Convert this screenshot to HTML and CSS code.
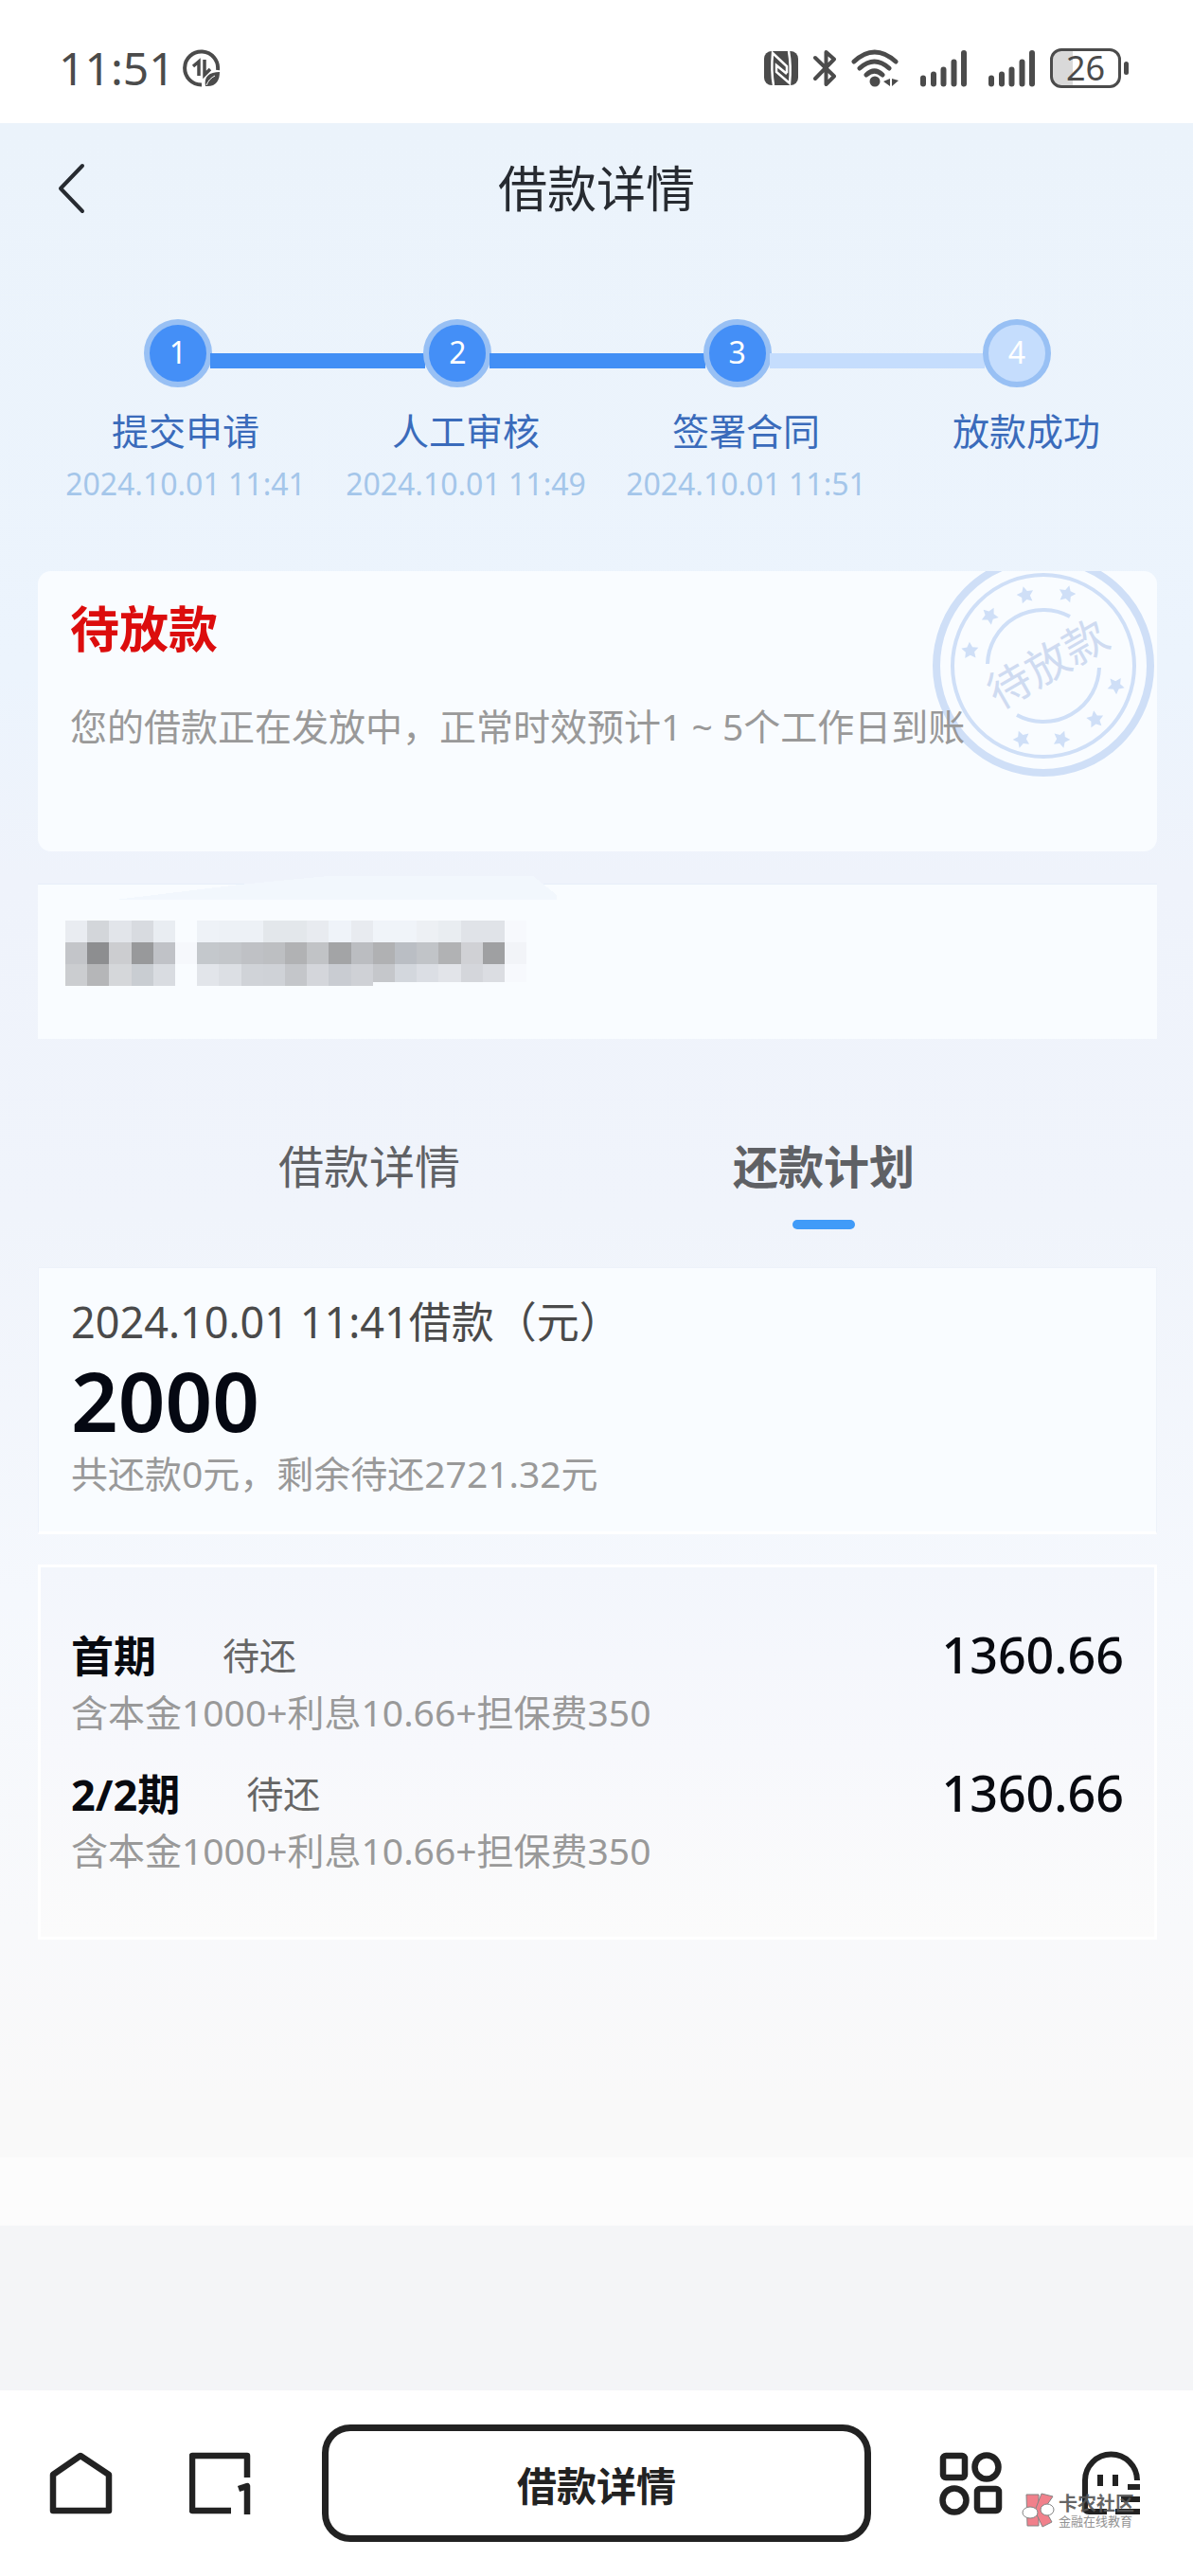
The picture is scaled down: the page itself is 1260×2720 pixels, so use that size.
FILE: index.html
```html
<!DOCTYPE html>
<html lang="zh-CN">
<head>
  <meta charset="UTF-8" />
  <meta name="viewport" content="width=device-width, initial-scale=1" />
  <title>借款详情</title>
  <link rel="stylesheet" href="styles.css">
</head>
<body>
  <div class="status-bar">
    <div class="status-left">
      <span class="time">11:51</span>
      <svg width="40" height="40" viewBox="0 0 40 40" fill="none" stroke="#4b4b4b">
        <path d="M37 22A17.500 17.500 0 1 0 20 37.500" stroke-width="4"/>
        <path d="M17 28V13l-6 5M23 11v16l6-6" stroke-width="3.500"/>
        <path d="M24 39c-2-10 4-15 15-15 0 9-4 16-15 15z" fill="#4b4b4b" stroke="none"/>
        <path d="M25 38c2-5 5-8 9-10" stroke="#fff" stroke-width="1"/>
      </svg>
    </div>
    <div class="status-right">
      <svg width="36" height="38" viewBox="0 0 36 38">
        <rect x="0" y="1" width="36" height="36" rx="8" fill="#4b4b4b"/>
        <path d="M10 37C8 26 8 14 9 3l15 14v7M26 1c2 11 2 24 1 34L13 23v-7l11 9" fill="none" stroke="#fff" stroke-width="2.500"/>
      </svg>
      <svg width="24" height="40" viewBox="0 0 24 40" fill="none" stroke="#4b4b4b" stroke-width="4" stroke-linejoin="round" stroke-linecap="round">
        <path d="M2 9l20 19.500L13.500 37V3L22 10.500 2 31"/>
      </svg>
      <svg width="50" height="40" viewBox="0 0 50 40" fill="none" stroke="#4b4b4b" stroke-width="5" stroke-linecap="round">
        <path d="M3 13Q24.500-7 47 13M9 20Q24.500 6 40 20M16 27Q24.500 19 33 27"/>
        <circle cx="25" cy="34" r="5.500" fill="#4b4b4b" stroke="none"/>
        <path d="M41 31v8l-7-5zM43 31v8l7-6z" fill="#4b4b4b" stroke="none"/>
      </svg>
      <svg class="signal" width="49" height="40" viewBox="0 0 49 40" stroke="#4b4b4b" stroke-width="6" stroke-linecap="round">
        <path d="M3 30.500v6M14 26.500v10M24.500 21.500v15M35.500 13.500v23M46 4v32.500"/>
      </svg>
      <svg class="signal" width="49" height="40" viewBox="0 0 49 40" stroke="#4b4b4b" stroke-width="6" stroke-linecap="round">
        <path d="M3 30.500v6M14 26.500v10M24.500 21.500v15M35.500 13.500v23M46 4v32.500"/>
      </svg>
      <div class="battery"><span>26</span></div>
    </div>
  </div>

  <main>
    <header class="page-header">
      <button class="back" aria-label="返回">
        <svg width="32" height="56" viewBox="0 0 32 56" fill="none" stroke="#272b31" stroke-width="4" stroke-linecap="round" stroke-linejoin="round">
          <path d="M27 4L4 28l23 24"/>
        </svg>
      </button>
      <h1>借款详情</h1>
    </header>

    <section class="stepper">
      <div class="markers">
        <span class="dot">1</span>
        <span class="line"></span>
        <span class="dot">2</span>
        <span class="line"></span>
        <span class="dot">3</span>
        <span class="line todo"></span>
        <span class="dot todo">4</span>
      </div>
      <ol class="steps">
        <li><strong>提交申请</strong><time>2024.10.01 11:41</time></li>
        <li><strong>人工审核</strong><time>2024.10.01 11:49</time></li>
        <li><strong>签署合同</strong><time>2024.10.01 11:51</time></li>
        <li><strong>放款成功</strong></li>
      </ol>
    </section>

    <section class="card state">
      <svg class="stamp" width="240" height="240" viewBox="-120 -120 240 240" fill="none" stroke="#cfdff7">
        <circle r="113" stroke-width="8"/>
        <circle r="96" stroke-width="4"/>
        <path d="M-59-2A59 59 0 0 1 28-52M59 2A59 59 0 0 1-28 52" stroke-width="4"/>
        <defs>
          <path id="star" d="M0-9l2.800 5.500 6.200 1-4.500 4.500 1 6.200-5.500-2.900-5.500 2.900 1-6.200-4.500-4.500 6.200-1z"/>
        </defs>
        <g fill="#cfdff7" stroke="none">
          <use href="#star" transform="translate(-19 -75) rotate(-15)"/>
          <use href="#star" transform="translate(25 -76) rotate(15)"/>
          <use href="#star" transform="translate(-57 -53) rotate(-45)"/>
          <use href="#star" transform="translate(-78 -16) rotate(-75)"/>
          <use href="#star" transform="translate(77 21) rotate(105)"/>
          <use href="#star" transform="translate(55 57) rotate(135)"/>
          <use href="#star" transform="translate(19 78) rotate(165)"/>
          <use href="#star" transform="translate(-23 78) rotate(195)"/>
        </g>
        <text class="stamp-text" x="5" y="17" text-anchor="middle" transform="rotate(-30)">待放款</text>
      </svg>
      <h2>待放款</h2>
      <p>您的借款正在发放中，正常时效预计1 ~ 5个工作日到账</p>
    </section>

    <section class="card account">
      <svg id="mosaic" class="mosaic" width="488" height="69" viewBox="0 0 488 69" shape-rendering="crispEdges">
        <path d="M53-22L184-38l94-9h216l25 20v5z" fill="#f2f7fd"/>
      </svg>
    </section>

    <div class="tabs" role="tablist">
      <button role="tab" aria-selected="false">借款详情</button>
      <button class="active" role="tab" aria-selected="true">还款计划</button>
    </div>

    <section class="card loan">
      <p class="loan-title">2024.10.01 11:41借款（元）</p>
      <p class="loan-amount">2000</p>
      <p class="loan-note">共还款0元，剩余待还2721.32元</p>
    </section>

    <ul class="card plan">
      <li>
        <div class="plan-row">
          <b>首期</b><span>待还</span><em>1360.66</em>
        </div>
        <p>含本金1000+利息10.66+担保费350</p>
      </li>
      <li>
        <div class="plan-row">
          <b>2/2期</b><span>待还</span><em>1360.66</em>
        </div>
        <p>含本金1000+利息10.66+担保费350</p>
      </li>
    </ul>
  </main>

  <nav class="toolbar">
    <div class="tools">
      <button aria-label="主页">
        <svg width="68" height="68" viewBox="0 0 68 68" fill="none" stroke="#222" stroke-width="6.500" stroke-linejoin="round">
          <path d="M4 25L33 5l30 20v38H4z"/>
        </svg>
      </button>
      <button aria-label="窗口">
        <svg width="68" height="68" viewBox="0 0 68 68" fill="none" stroke="#222" stroke-width="6.500" stroke-linejoin="round">
          <path d="M61 28V5H3v58h41M52 40l9-3v30"/>
        </svg>
      </button>
    </div>
    <button class="page-name">借款详情</button>
    <div class="tools">
      <button aria-label="应用">
        <svg width="68" height="68" viewBox="0 0 68 68" fill="none" stroke="#222" stroke-width="6.500">
          <rect x="4" y="5" width="23" height="23" rx="3"/>
          <circle cx="50" cy="17" r="12.500"/>
          <circle cx="16" cy="52" r="12.500"/>
          <rect x="40" y="40" width="23" height="23" rx="3"/>
        </svg>
      </button>
      <button aria-label="我的">
        <svg width="68" height="68" viewBox="0 0 68 68" fill="none" stroke="#222" stroke-width="6">
          <path d="M29 64H10q-4 0-4-4V31a27.500 27.500 0 0 1 55 0M64 38H51M64 51H44M64 64H38"/>
          <path d="M22 25v12M38 25v12"/>
        </svg>
      </button>
    </div>
    <div class="watermark">
      <svg width="36" height="38" viewBox="0 0 36 38" fill="#f0737f" stroke="#777" stroke-width="1">
        <path d="M5 2h13v33H6z"/>
        <path d="M21 1l12 3-9 13 8 14-10 5-8-17z"/>
        <ellipse cx="9" cy="21" rx="8" ry="6" fill="#fff"/>
        <ellipse cx="27" cy="18" rx="7" ry="6" fill="#fff"/>
      </svg>
      <div>
        <b>卡农社区</b>
        <small>金融在线教育</small>
      </div>
    </div>
  </nav>

  <script>
    // masked name and card number, one colour per block
    const rows = [
      "e9ecf1 d3d6da e2e5ea d8dbe0 e9edf2 - eef2f7 edf1f6 edf1f6 e3e7eb e3e7eb e8ebf0 eff3f9 e8ebf0 f0f4f9 f0f4f9 edf0f4 e9edf1 e0e3e8 e0e3e8 f7f9fd",
      "c3c5c9 8d8e90 cccdd0 98999b c0c2c7 f6f8fc c4c8cc c3c6ca bfc1c5 bdbfc2 b1b2b4 c1c3c6 a3a4a6 bbbdc1 b0b1b3 babec4 c1c4c8 b1b2b4 d0d1d5 9fa0a2 f2f4f8",
      "cbcdd0 b5b6b8 d5d7da c9cdd2 d9dce1 - e2e5ea dcdfe4 d0d3d8 cfd2d7 c4c6ca d4d6db c9ccd2 cfd1d6 c5c7cb d3d7dd dbdee4 e2e4e9 d4d6db dbdde2 f7f9fd"
    ];
    const mosaic = document.getElementById("mosaic");
    rows.forEach((row, y) => {
      row.split(" ").forEach((color, x) => {
        if (color === "-") return;
        const block = document.createElementNS("http://www.w3.org/2000/svg", "rect");
        block.setAttribute("x", x * 23.2);
        block.setAttribute("y", y * 23);
        block.setAttribute("width", 23.2);
        block.setAttribute("height", y === 2 && x > 13 ? 19 : 23);
        block.setAttribute("fill", "#" + color);
        mosaic.appendChild(block);
      });
    });
  </script>
</body>
</html>
```
FILE: styles.css
```css
* {
  box-sizing: border-box;
  margin: 0;
  padding: 0;
}

body {
  display: flex;
  flex-direction: column;
  min-height: 100vh;
  font-family: "Noto Sans", "Noto Sans CJK SC", sans-serif;
  background: #f4f5f7;
}

button {
  border: none;
  background: none;
  font-family: inherit;
  cursor: pointer;
}

svg {
  display: block;
}

ul,
ol {
  list-style: none;
}

.status-bar {
  display: flex;
  justify-content: space-between;
  align-items: center;
  height: 130px;
  padding: 14px 68px 0 62px;
  background: #fff;
  color: #4b4b4b;
}

.status-left {
  display: flex;
  align-items: center;
  gap: 8px;
}

.time {
  font-size: 48px;
  line-height: 56px;
}

.status-right {
  display: flex;
  align-items: center;
  gap: 16px;
}

.signal {
  margin-left: 7px;
}

.battery {
  position: relative;
  width: 75px;
  height: 42px;
  margin-right: 8px;
  border: 3px solid #4b4b4b;
  border-radius: 12px;
  background: linear-gradient(90deg, #d9d9d9 30%, #fff 30%);
  font-size: 36px;
  line-height: 36px;
  text-align: center;
}

.battery::after {
  content: "";
  position: absolute;
  top: 11px;
  right: -11px;
  width: 5px;
  height: 14px;
  border-radius: 3px;
  background: #4b4b4b;
}

main {
  flex: 1;
  margin-bottom: 174px;
  padding-bottom: 72px;
  background:
    linear-gradient(#fcfcfc, #fcfcfc) bottom / 100% 72px no-repeat,
    linear-gradient(#ebf3fb 0%, #ecf4fd 26%, #eff3fb 36%, #f0f4fb 52%, #f5f8fd 70%, #f8f9fb 86%, #f9f9f9 94%);
}

.page-header {
  display: grid;
  grid-template-columns: 60px 1fr 60px;
  align-items: center;
  height: 138px;
  padding: 0 60px;
}

h1 {
  color: #272b31;
  font-size: 52px;
  font-weight: 400;
  line-height: 60px;
  text-align: center;
}

.stepper {
  padding-top: 69px;
}

.markers {
  display: flex;
  padding: 0 150px 0 152px;
}

.dot {
  width: 72px;
  height: 72px;
  border: 6px solid #98c0f4;
  border-radius: 50%;
  background: #448ff7;
  color: #fff;
  font-size: 32px;
  line-height: 58px;
  text-align: center;
}

.dot.todo {
  background: #c5ddfd;
}

.line {
  flex: 1;
  height: 16px;
  margin: 36px -2px 0;
  background: #428ff5;
}

.line.todo {
  background: #c5ddfd;
}

.steps {
  display: grid;
  grid-template-columns: repeat(4, 1fr);
  padding: 22px 28px 0 48px;
  text-align: center;
}

.steps strong {
  display: block;
  margin-bottom: 12px;
  color: #3a6bbb;
  font-size: 39px;
  font-weight: 400;
  line-height: 48px;
}

.steps time {
  display: block;
  color: #a4c6ea;
  font-size: 32px;
  line-height: 40px;
}

.card {
  margin: 34px 38px 0 40px;
  background: #f9fcff;
}

.state {
  position: relative;
  overflow: hidden;
  margin-top: 72px;
  padding: 37px 34px 108px;
  border-radius: 14px;
}

.stamp {
  position: absolute;
  top: -20px;
  right: 0;
}

.stamp-text {
  fill: #cfdbf1;
  stroke: none;
  font-size: 46px;
}

.state h2 {
  position: relative;
  color: #dc0d0d;
  font-size: 52px;
  font-weight: 700;
  line-height: 48px;
}

.state p {
  position: relative;
  margin-top: 55px;
  color: #999;
  font-size: 39px;
  line-height: 48px;
}

.account {
  padding: 38px 29px 56px;
  border-top: 1px solid #e6eef9;
}

.mosaic {
  overflow: visible;
}

.tabs {
  display: grid;
  grid-template-columns: 1fr 1fr;
  margin-top: 103px;
  padding: 0 150px;
}

.tabs button {
  color: #5f6165;
  font-size: 48px;
  line-height: 64px;
}

.tabs button::after {
  content: "";
  display: block;
  width: 66px;
  height: 10px;
  margin: 24px auto 0;
  border-radius: 5px;
}

.tabs .active {
  font-weight: 700;
}

.tabs .active::after {
  background: #409bf8;
}

.loan {
  margin-top: 40px;
  padding: 29px 34px 37px;
  border: 1px solid #edf2fa;
  border-bottom: 3px solid #fff;
}

.loan-title {
  color: #4a4a4a;
  font-size: 45px;
  line-height: 56px;
}

.loan-amount {
  color: #050812;
  font-size: 87px;
  font-weight: 600;
  line-height: 108px;
}

.loan-note {
  color: #999;
  font-size: 39px;
  line-height: 48px;
}

.plan {
  margin-top: 32px;
  padding: 57px 32px 41px;
  border: 3px solid #fff;
  background: linear-gradient(#f3f6fc, #f7f8fc 50%, #fbfbfb);
}

.plan li {
  padding-bottom: 24px;
}

.plan-row {
  display: flex;
  align-items: center;
  height: 68px;
}

.plan b {
  color: #080a10;
  font-size: 45px;
  font-weight: 700;
}

.plan span {
  margin-left: 70px;
  color: #666;
  font-size: 39px;
}

.plan em {
  margin-left: auto;
  color: #080a10;
  font-size: 52px;
  font-style: normal;
  font-weight: 500;
}

.plan p {
  padding-top: 2px;
  color: #999;
  font-size: 39px;
  line-height: 52px;
}

.toolbar {
  position: relative;
  display: flex;
  align-items: center;
  gap: 72px;
  height: 196px;
  padding: 0 52px;
  background: #fff;
}

.tools {
  display: flex;
  gap: 80px;
}

.page-name {
  flex: 1;
  height: 124px;
  border: 7px solid #222;
  border-radius: 30px;
  color: #222;
  font-size: 42px;
  font-weight: 700;
}

.watermark {
  position: absolute;
  right: 62px;
  bottom: 50px;
  display: flex;
  align-items: center;
  gap: 3px;
  color: #555;
  opacity: 0.9;
}

.watermark b {
  display: block;
  font-size: 20px;
  line-height: 22px;
}

.watermark small {
  display: block;
  color: #888;
  font-size: 13px;
  line-height: 14px;
}
```
